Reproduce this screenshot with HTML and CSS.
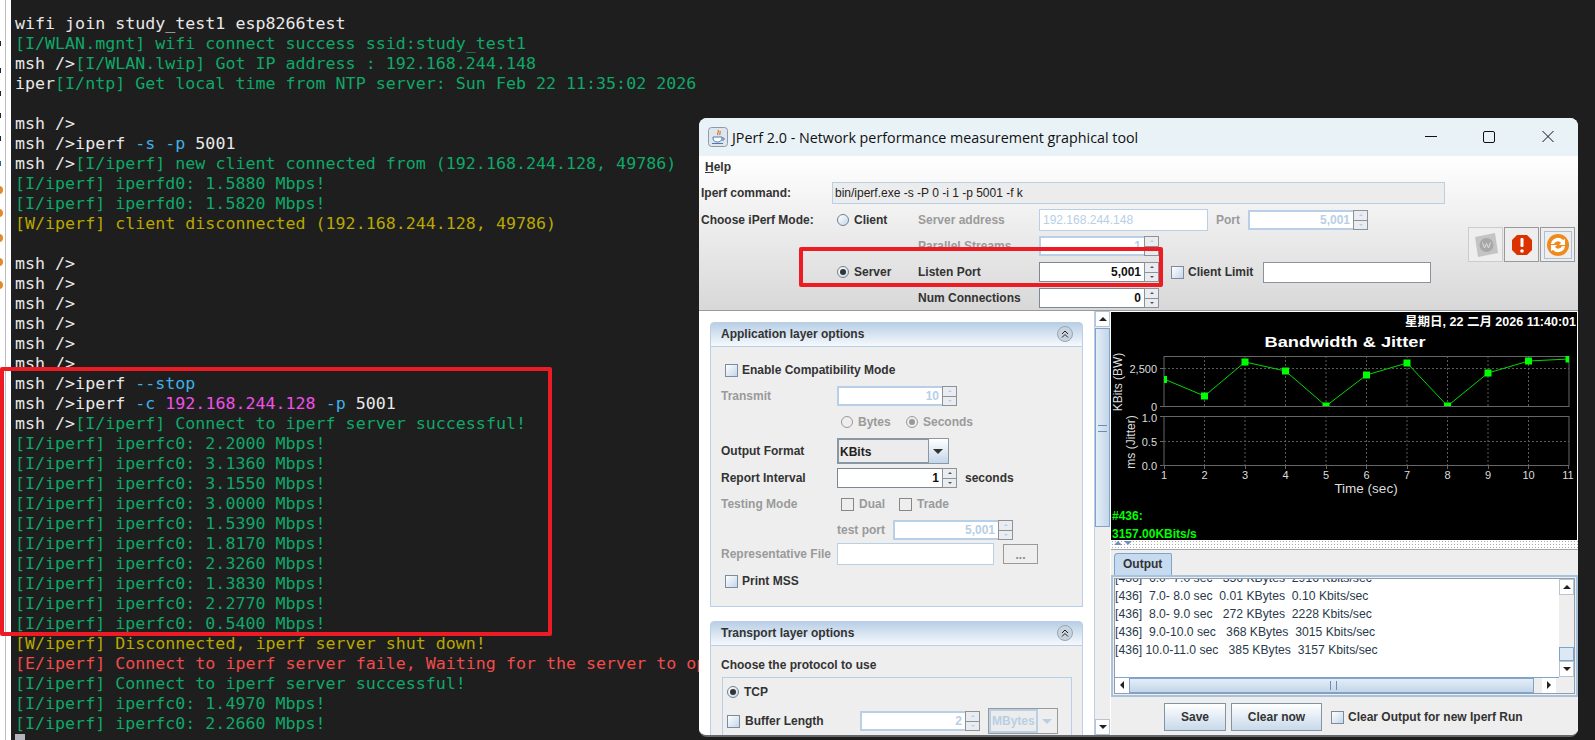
FILE: index.html
```html
<!DOCTYPE html>
<html lang="en">
<head>
<meta charset="utf-8">
<title>JPerf and msh terminal</title>
<link rel="stylesheet" href="styles.css">
</head>
<body>
<div class="desktop">
  <svg class="strip" width="11" height="740" viewBox="0 0 11 740">
    <rect width="11" height="740" fill="#fff"/>
    <rect x="5" width="1" height="740" fill="#bdbdbd"/>
    <path d="M0 41v5M0 68v5M0 91v5M0 113v5M0 136v5" stroke="#223" stroke-width="2"/>
    <path d="M0 161v5" stroke="#269" stroke-width="2"/>
    <g fill="#e08a2c"><circle cx="-1" cy="190" r="4"/><circle cx="-1" cy="213" r="4"/><circle cx="-1" cy="238" r="4"/><circle cx="-1" cy="262" r="4"/><circle cx="-1" cy="285" r="4"/></g>
  </svg>
  <main class="term">
    <div class="l"><span class="w">wifi join study_test1 esp8266test</span></div>
    <div class="l g">[I/WLAN.mgnt] wifi connect success ssid:study_test1</div>
    <div class="l"><span class="w">msh /&gt;</span><span class="g">[I/WLAN.lwip] Got IP address : 192.168.244.148</span></div>
    <div class="l"><span class="w">iper</span><span class="g">[I/ntp] Get local time from NTP server: Sun Feb 22 11:35:02 2026</span></div>
    <div class="l"></div>
    <div class="l w">msh /&gt;</div>
    <div class="l w">msh /&gt;iperf <span class="b">-s -p</span> 5001</div>
    <div class="l"><span class="w">msh /&gt;</span><span class="g">[I/iperf] new client connected from (192.168.244.128, 49786)</span></div>
    <div class="l g">[I/iperf] iperfd0: 1.5880 Mbps!</div>
    <div class="l g">[I/iperf] iperfd0: 1.5820 Mbps!</div>
    <div class="l y">[W/iperf] client disconnected (192.168.244.128, 49786)</div>
    <div class="l"></div>
    <div class="l w">msh /&gt;</div>
    <div class="l w">msh /&gt;</div>
    <div class="l w">msh /&gt;</div>
    <div class="l w">msh /&gt;</div>
    <div class="l w">msh /&gt;</div>
    <div class="l w">msh /&gt;</div>
    <div class="l w">msh /&gt;iperf <span class="b">--stop</span></div>
    <div class="l w">msh /&gt;iperf <span class="b">-c</span> <span class="m">192.168.244.128</span> <span class="b">-p</span> 5001</div>
    <div class="l"><span class="w">msh /&gt;</span><span class="g">[I/iperf] Connect to iperf server successful!</span></div>
    <div class="l g">[I/iperf] iperfc0: 2.2000 Mbps!</div>
    <div class="l g">[I/iperf] iperfc0: 3.1360 Mbps!</div>
    <div class="l g">[I/iperf] iperfc0: 3.1550 Mbps!</div>
    <div class="l g">[I/iperf] iperfc0: 3.0000 Mbps!</div>
    <div class="l g">[I/iperf] iperfc0: 1.5390 Mbps!</div>
    <div class="l g">[I/iperf] iperfc0: 1.8170 Mbps!</div>
    <div class="l g">[I/iperf] iperfc0: 2.3260 Mbps!</div>
    <div class="l g">[I/iperf] iperfc0: 1.3830 Mbps!</div>
    <div class="l g">[I/iperf] iperfc0: 2.2770 Mbps!</div>
    <div class="l g">[I/iperf] iperfc0: 0.5400 Mbps!</div>
    <div class="l y">[W/iperf] Disconnected, iperf server shut down!</div>
    <div class="l r">[E/iperf] Connect to iperf server faile, Waiting for the server to open!</div>
    <div class="l g">[I/iperf] Connect to iperf server successful!</div>
    <div class="l g">[I/iperf] iperfc0: 1.4970 Mbps!</div>
    <div class="l g">[I/iperf] iperfc0: 2.2660 Mbps!</div>
    <div class="cursor"></div>
  </main>
</div>

<section class="win">
  <header class="title">
    <svg class="jicon" width="20" height="20" viewBox="0 0 20 20">
      <rect x=".5" y=".5" width="19" height="19" rx="3" fill="#dfe6ee" stroke="#8e9aa8"/>
      <path d="M10 3c2 2-2 3 0 5M12 4c1 2-1 2 0 4" fill="none" stroke="#d8762a" stroke-width="1.2"/>
      <path d="M5 10h9v1c0 3-2 4-4.500 4S5 14 5 11zM14 11h2v2h-2" fill="#fff" stroke="#4f7aa8"/>
      <path d="M4 16.500h11" stroke="#4f7aa8"/>
    </svg>
    <span class="title-text">JPerf 2.0 - Network performance measurement graphical tool</span>
    <svg class="ctrl" width="130" height="14" viewBox="0 0 130 14">
      <path d="M0 6.500h12" stroke="#111"/>
      <rect x="58.500" y="1.500" width="11" height="11" rx="1.500" fill="none" stroke="#111"/>
      <path d="M117.500 1l11 11M128.500 1l-11 11" stroke="#111"/>
    </svg>
  </header>

  <div class="top">
    <div class="menu"><span><u>H</u>elp</span></div>
    <div class="top-grid">
      <div class="rows">
        <div class="row"><span class="c-mode">Iperf command:</span><div class="cmd">bin/iperf.exe -s -P 0 -i 1 -p 5001 -f k</div></div>
        <div class="row">
          <span class="c-mode">Choose iPerf Mode:</span>
          <span class="c-radio"><i class="radio"></i>Client</span>
          <span class="c-label off">Server address</span>
          <div class="field off w169">192.168.244.148</div>
          <span class="port off">Port</span>
          <div class="spin off w120"><div class="val">5,001</div><div class="btns"><i></i><i></i></div></div>
        </div>
        <div class="row">
          <span class="c-mode"></span><span class="c-radio"></span>
          <span class="c-label off">Parallel Streams</span>
          <div class="spin off w120"><div class="val">1</div><div class="btns"><i></i><i></i></div></div>
        </div>
        <div class="row">
          <span class="c-mode"></span>
          <span class="c-radio"><i class="radio on"></i>Server</span>
          <span class="c-label">Listen Port</span>
          <div class="spin w120"><div class="val">5,001</div><div class="btns"><i></i><i></i></div></div>
          <span class="limit"><i class="check"></i>Client Limit</span>
          <div class="field w168"></div>
        </div>
        <div class="row">
          <span class="c-mode"></span><span class="c-radio"></span>
          <span class="c-label">Num Connections</span>
          <div class="spin w120"><div class="val">0</div><div class="btns"><i></i><i></i></div></div>
        </div>
      </div>
      <div class="actions">
        <div class="act dim"><svg width="30" height="30" viewBox="0 0 30 30"><path d="M4 7l20-4 3 20-20 4z" fill="#c4c4c4"/><circle cx="15.500" cy="15" r="7" fill="#a8a8a8"/><path d="M11.500 12.500l2 5.500 2-4.500 2 4.500 2-5.500" fill="none" stroke="#ddd"/></svg></div>
        <div class="act"><svg width="24" height="24" viewBox="0 0 24 24"><path d="M7 2h10l5 5v10l-5 5H7l-5-5V7z" fill="#dc3200"/><rect x="10.500" y="5" width="3" height="9" rx="1" fill="#fff"/><circle cx="12" cy="18" r="1.800" fill="#fff"/></svg></div>
        <div class="act framed"><svg width="24" height="24" viewBox="0 0 24 24"><circle cx="12" cy="12" r="11" fill="#ee8a1e"/><path d="M5 11a7 7 0 0 1 12-4l2-1v6h-6l2-2a4 4 0 0 0-7 1zM19 13a7 7 0 0 1-12 4l-2 1v-6h6l-2 2a4 4 0 0 0 7-1z" fill="#fff"/></svg></div>
      </div>
    </div>
  </div>

  <div class="main">
    <div class="left">
      <section class="panel">
        <header class="phead"><span>Application layer options</span><svg class="fold" width="16" height="16" viewBox="0 0 16 16"><circle cx="8" cy="8" r="7.500" fill="#c7d3df" stroke="#99a6b3"/><path d="M5 8l3-3 3 3M5 11.500l3-3 3 3" fill="none" stroke="#222"/></svg></header>
        <div class="pbody app">
          <div class="prow chk"><i class="check"></i>Enable Compatibility Mode</div>
          <div class="prow off"><span class="plabel">Transmit</span><div class="spin off w120"><div class="val">10</div><div class="btns"><i></i><i></i></div></div></div>
          <div class="prow off"><span class="plabel"></span><span class="opt w65"><i class="radio dis"></i>Bytes</span><span class="opt"><i class="radio dis on"></i>Seconds</span></div>
          <div class="prow low"><span class="plabel">Output Format</span><div class="combo w112"><div class="cval">KBits</div><div class="carrow"></div></div></div>
          <div class="prow"><span class="plabel">Report Interval</span><div class="spin w120"><div class="val">1</div><div class="btns"><i></i><i></i></div></div><span class="unit">seconds</span></div>
          <div class="prow off"><span class="plabel">Testing Mode</span><span class="opt w58"><i class="check dis"></i>Dual</span><span class="opt"><i class="check dis"></i>Trade</span></div>
          <div class="prow off"><span class="plabel"></span><span class="tp">test port</span><div class="spin off w120"><div class="val">5,001</div><div class="btns"><i></i><i></i></div></div></div>
          <div class="prow off"><span class="plabel">Representative File</span><div class="field off w157"></div><div class="dots">...</div></div>
          <div class="prow chk"><i class="check"></i>Print MSS</div>
        </div>
      </section>
      <section class="panel next">
        <header class="phead"><span>Transport layer options</span><svg class="fold" width="16" height="16" viewBox="0 0 16 16"><circle cx="8" cy="8" r="7.500" fill="#c7d3df" stroke="#99a6b3"/><path d="M5 8l3-3 3 3M5 11.500l3-3 3 3" fill="none" stroke="#222"/></svg></header>
        <div class="pbody trans">
          <div class="choose">Choose the protocol to use</div>
          <div class="box">
            <div class="brow"><i class="radio on"></i>TCP</div>
            <div class="brow"><i class="check"></i><span class="blabel">Buffer Length</span><div class="spin off w120 small"><div class="val">2</div><div class="btns"><i></i><i></i></div></div><div class="combo off w70"><div class="cval">MBytes</div><div class="carrow"></div></div></div>
          </div>
        </div>
      </section>
    </div>

    <div class="vbar"><div class="sb-up"></div><div class="sb-thumb"></div><div class="sb-track"></div><div class="sb-down"></div></div>

    <div class="right">
      <svg class="chart" width="466" height="228" viewBox="1111 312 466 228">
        <defs><clipPath id="plot"><rect x="1164" y="356" width="405" height="50"/></clipPath></defs>
        <rect x="1111" y="312" width="466" height="228" fill="#000"/>
        <text class="t-date" x="1576" y="326" text-anchor="end">星期日, 22 二月 2026 11:40:01</text>
        <text class="t-title" x="1345" y="347" text-anchor="middle" textLength="161" lengthAdjust="spacingAndGlyphs">Bandwidth &amp; Jitter</text>
        <g stroke="#5a5a5a" stroke-dasharray="2 2" fill="none">
          <path d="M1204.500 356v50M1245 356v50M1285.500 356v50M1326 356v50M1366.500 356v50M1407 356v50M1447.500 356v50M1488 356v50M1528.500 356v50"/>
          <path d="M1204.500 416v49M1245 416v49M1285.500 416v49M1326 416v49M1366.500 416v49M1407 416v49M1447.500 416v49M1488 416v49M1528.500 416v49"/>
          <path d="M1164 368.500h405M1164 441.500h405"/>
        </g>
        <g stroke="#666" fill="none">
          <rect x="1164" y="356.500" width="405" height="50"/>
          <rect x="1164" y="416.500" width="405" height="49"/>
          <path d="M1160 368.500h4M1160 406.500h4M1160 416.500h4M1160 441.500h4M1160 465.500h4M1164.500 465v4M1204.500 465v4M1245.500 465v4M1285.500 465v4M1326.500 465v4M1366.500 465v4M1407.500 465v4M1447.500 465v4M1488.500 465v4M1528.500 465v4M1568.500 465v4"/>
        </g>
        <g clip-path="url(#plot)">
          <polyline points="1164,379 1204.500,396 1245,362 1285.500,371 1326,406 1366.500,375 1407,363 1447.500,406 1488,373 1528.500,361 1569,359" fill="none" stroke="#00d800"/>
          <g fill="#00ff00">
            <rect x="1160" y="376" width="7" height="7"/><rect x="1201" y="392.500" width="7" height="7"/><rect x="1241.500" y="358.500" width="7" height="7"/><rect x="1282" y="367.500" width="7" height="7"/><rect x="1322.500" y="402.500" width="7" height="7"/><rect x="1363" y="371.500" width="7" height="7"/><rect x="1403.500" y="359.500" width="7" height="7"/><rect x="1444" y="402.500" width="7" height="7"/><rect x="1484.500" y="369.500" width="7" height="7"/><rect x="1525" y="357.500" width="7" height="7"/><rect x="1565.500" y="355.500" width="7" height="7"/>
          </g>
        </g>
        <g class="t-tick">
          <text x="1157" y="373" text-anchor="end">2,500</text>
          <text x="1157" y="411" text-anchor="end">0</text>
          <text x="1157" y="422" text-anchor="end">1.0</text>
          <text x="1157" y="446" text-anchor="end">0.5</text>
          <text x="1157" y="470" text-anchor="end">0.0</text>
        </g>
        <g class="t-tick" text-anchor="middle">
          <text x="1164" y="479">1</text><text x="1204.500" y="479">2</text><text x="1245" y="479">3</text><text x="1285.500" y="479">4</text><text x="1326" y="479">5</text><text x="1366.500" y="479">6</text><text x="1407" y="479">7</text><text x="1447.500" y="479">8</text><text x="1488" y="479">9</text><text x="1528.500" y="479">10</text><text x="1568" y="479">11</text>
        </g>
        <text class="t-time" x="1366" y="493" text-anchor="middle">Time (sec)</text>
        <text class="t-axis" transform="translate(1122 382) rotate(-90)" text-anchor="middle">KBits (BW)</text>
        <text class="t-axis" transform="translate(1135 442) rotate(-90)" text-anchor="middle">ms (Jitter)</text>
        <text class="t-green" x="1112" y="520">#436:</text>
        <text class="t-green" x="1112" y="538">3157.00KBits/s</text>
      </svg>
      <div class="split"><i class="tri-up"></i><i class="tri-down"></i></div>
      <div class="output">
        <div class="tab">Output</div>
        <div class="tabbox">
          <div class="log">
            <div class="log-text">
              <div>[436]  6.0- 7.0 sec   356 KBytes  2916 Kbits/sec</div>
              <div>[436]  7.0- 8.0 sec  0.01 KBytes  0.10 Kbits/sec</div>
              <div>[436]  8.0- 9.0 sec   272 KBytes  2228 Kbits/sec</div>
              <div>[436]  9.0-10.0 sec   368 KBytes  3015 Kbits/sec</div>
              <div>[436] 10.0-11.0 sec   385 KBytes  3157 Kbits/sec</div>
            </div>
            <div class="log-v"><div class="sb-up"></div><div class="sb-track"></div><div class="sb-thumb2"></div><div class="sb-down"></div></div>
            <div class="log-h"><div class="hb-left"></div><div class="hb-thumb"></div><div class="hb-right"></div></div>
          </div>
        </div>
        <div class="btnrow">
          <div class="btn b62">Save</div>
          <div class="btn b91">Clear now</div>
          <span class="clearopt"><i class="check"></i>Clear Output for new Iperf Run</span>
        </div>
      </div>
    </div>
  </div>
</section>

<div class="redbox one"></div>
<div class="redbox two"></div>
</body>
</html>
```
FILE: styles.css
```css
* { box-sizing: border-box; }
html, body { margin: 0; height: 740px; overflow: hidden; background: #1e1e1e; }
i { font-style: normal; display: block; flex: none; }

.desktop { display: flex; height: 740px; }
.strip { flex: none; display: block; }
.term {
  flex: 1; padding: 14px 0 0 4px; overflow: hidden;
  font: 16.65px/20px "DejaVu Sans Mono", "Liberation Mono", monospace;
  color: #e6e6e6;
}
.l { height: 20px; white-space: pre; }
.w { color: #e8e8e8; }
.g { color: #0fa868; }
.y { color: #b8a800; }
.r { color: #f14c4c; }
.b { color: #3fb0e8; }
.m { color: #f050e8; }
.cursor { width: 10px; height: 6px; background: #b4b4be; }

.redbox { position: absolute; border: 4px solid #ed1c24; border-radius: 2px; }
.redbox.one { left: 799px; top: 247px; width: 364px; height: 40px; }
.redbox.two { left: 0; top: 367px; width: 552px; height: 269px; }

/* window */
.win {
  position: absolute; left: 699px; top: 118px; width: 879px; height: 619px;
  background: #eee; border-radius: 8px; overflow: hidden;
  border-bottom: 2px solid #62686d;
  font: bold 12px "Liberation Sans", Arial, sans-serif; color: #333;
}
.title { height: 38px; background: #e9f3f7; display: flex; align-items: center; padding-left: 9px; }
.jicon { flex: none; }
.title-text { flex: none; margin-left: 4px; font: 14.3px "Open Sans", "Noto Sans", sans-serif; color: #111; }
.ctrl { flex: none; margin-left: auto; margin-right: 23px; }

.top { height: 154px; background: linear-gradient(#fff, #d8d8d8); }
.menu { height: 24px; padding: 4px 0 0 6px; color: #333; }
.top-grid { display: flex; }
.rows { width: 769px; flex: none; }
.row { height: 26px; display: flex; align-items: center; }
.row + .row { padding-top: 2px; }
.c-mode { width: 134px; padding-left: 2px; flex: none; }
.c-radio { width: 85px; padding-left: 4px; flex: none; display: flex; align-items: center; gap: 5px; }
.c-label { width: 121px; flex: none; }
.port { margin: 0 10px 0 8px; flex: none; width: 22px; }
.off, .off .plabel { color: #9a9a9a; }
.cmd {
  width: 613px; height: 22px; margin-left: -1px; padding: 3px 2px; font-weight: normal; color: #222;
  border: 1px solid #b8cfe5; background: #ececec; font-size: 12px; line-height: 15px;
}
.radio {
  width: 12px; height: 12px; border-radius: 50%; border: 1px solid #71808f;
  background: linear-gradient(135deg, #fff, #c6d8ea); position: relative;
}
.radio.on::after {
  content: ""; position: absolute; left: 2px; top: 2px; width: 6px; height: 6px;
  border-radius: 50%; background: #333;
}
.radio.dis { border-color: #999; background: #eee; }
.radio.dis.on::after { background: #999; }
.check {
  width: 13px; height: 13px; border: 1px solid #7c8c9c;
  background: linear-gradient(135deg, #fff, #c3d6e9);
}
.check.dis { border-color: #888; background: #eee; }
.field { height: 22px; border: 1px solid #8a939c; background: #fff; flex: none; }
.field.off { border-color: #b8cfe5; font-weight: normal; color: #b8cfe5; padding: 3px 3px; line-height: 14px; font-size: 12px; }
.w169 { width: 169px; }
.w168 { width: 168px; height: 21px; }
.w157 { width: 157px; }
.spin { display: flex; height: 20px; flex: none; }
.w120 { width: 120px; }
.val {
  flex: 1; background: #fff; border: 1px solid #7d8893; border-right: 0;
  text-align: right; padding-right: 3px; line-height: 18px; color: #111;
}
.spin.off .val { border: 2px solid #b8cfe5; border-right: 0; color: #b8cfe5; line-height: 16px; background: #fff; }
.btns { width: 15px; flex: none; display: flex; flex-direction: column; }
.btns i {
  flex: 1; border: 1px solid #8e9295; background: #e9edf2; position: relative;
}
.btns i + i { border-top: 0; }
.btns i::after {
  content: ""; position: absolute; left: 5px; top: 3px;
  border: 2px solid transparent; border-top: 0; border-bottom: 2px solid #555;
}
.btns i + i::after { border-bottom: 0; border-top: 2px solid #555; }
.spin.off .btns i::after { border-bottom-color: #b8cfe5; border-top-color: #b8cfe5; }
.limit { margin-left: 12px; width: 92px; flex: none; display: flex; align-items: center; gap: 4px; }
.actions { display: flex; gap: 1px; margin-top: 47px; align-items: flex-start; height: 35px; }
.act {
  width: 35px; height: 35px; border: 1px solid #999; background: #eee;
  display: flex; align-items: center; justify-content: center;
}
.act.dim { border-color: #ccc; }
.act.framed svg { outline: 1px solid #a9c0d6; outline-offset: 1px; }

/* main */
.main { display: flex; height: 425px; border-top: 1px solid #989c9f; }
.left { width: 395px; flex: none; background: #fff; padding: 11px 11px 0; overflow: hidden; }
.panel { width: 373px; }
.next { margin-top: 14px; }
.phead {
  height: 25px; display: flex; align-items: center; justify-content: space-between; padding: 0 9px 2px 10px;
  background: linear-gradient(#b9cfe6, #f6f9fc); border: 1px solid #b8cfe5; border-radius: 4px 4px 0 0; color: #333;
}
.fold { flex: none; display: block; }
.pbody { border: 1px solid #b8cfe5; border-top: 0; background: #eee; }
.app { height: 260px; padding-top: 10px; display: grid; grid-template-rows: 26px 26px 26px 30px 26px 26px 26px 22px 32px; }
.prow { display: flex; align-items: center; padding-left: 10px; }
.prow.chk { padding-left: 14px; gap: 4px; }
.prow.low { padding-top: 2px; }
.plabel { width: 116px; flex: none; }
.opt { display: flex; align-items: center; gap: 5px; margin-left: 4px; }
.w65 { width: 61px; }
.w58 { width: 54px; }
.combo { display: flex; height: 26px; border: 1px solid #8a97a4; flex: none; }
.w112 { width: 112px; }
.w70 { width: 70px; }
.cval { flex: 1; padding: 5px 1px; border: 1px solid #8a97a4; background: #ececec; color: #222; }
.carrow {
  width: 19px; flex: none; background: linear-gradient(#fff, #c3d6e9); position: relative;
}
.carrow::after {
  content: ""; position: absolute; left: 4px; top: 10px;
  border: 5px solid transparent; border-bottom: 0; border-top: 5px solid #333;
}
.combo.off { border-color: #999; }
.combo.off .cval { border: 2px solid #b8cfe5; color: #b8cfe5; padding: 3px 1px; }
.combo.off .carrow { background: #eee; }
.combo.off .carrow::after { border-top-color: #b8cfe5; }
.unit { margin-left: 8px; }
.tp { width: 56px; flex: none; }
.dots {
  width: 35px; height: 20px; margin-left: 9px; border: 1px solid #999; flex: none;
  text-align: center; line-height: 20px; color: #888;
}
.trans { height: 120px; }
.choose { height: 31px; padding: 12px 0 0 10px; }
.box { margin-left: 11px; width: 350px; height: 90px; border: 1px solid #b8cfe5; padding: 0 4px; }
.brow { height: 28px; display: flex; align-items: center; gap: 5px; }
.brow + .brow { height: 30px; }
.blabel { width: 110px; flex: none; }
.small { margin-right: 3px; }

.vbar { width: 16px; flex: none; background: #eee; display: flex; flex-direction: column; border-left: 1px solid #b8cfe5; }
.sb-up, .sb-down { height: 16px; flex: none; background: #fff; border: 1px solid #b8c4d0; position: relative; }
.sb-up::after, .sb-down::after {
  content: ""; position: absolute; left: 3px; top: 5px; border: 4px solid transparent;
}
.sb-up::after { border-top: 0; border-bottom: 4px solid #222; }
.sb-down::after { border-bottom: 0; border-top: 4px solid #222; }
.sb-thumb {
  height: 199px; flex: none; border: 1px solid #7fa3cb; margin-top: 1px; position: relative;
  background: linear-gradient(90deg, #e4edf6, #c3d6ea);
}
.sb-thumb::after {
  content: ""; position: absolute; left: 2px; right: 2px; top: 96px; height: 5px;
  border-top: 1px solid #6c8db3; border-bottom: 1px solid #6c8db3;
}
.sb-track { flex: 1; background: #eee; }

.right { flex: 1; min-width: 0; padding: 1px 0 0 1px; background: #fff; }
.chart { display: block; }
.t-date { font: bold 12.5px "Liberation Sans", "Noto Sans CJK SC", sans-serif; fill: #fff; }
.t-title { font: bold 15px "Liberation Sans", sans-serif; fill: #fff; }
.t-tick { font: 11px "Liberation Sans", sans-serif; fill: #ddd; }
.t-axis { font: 12px "Liberation Sans", sans-serif; fill: #ddd; }
.t-time { font: 13.5px "Liberation Sans", sans-serif; fill: #ddd; }
.t-green { font: bold 12px "Liberation Sans", sans-serif; fill: #00ff00; }
.split {
  height: 9px; display: flex; gap: 2px; padding: 1px 0 0 3px; background-color: #fff;
  background-image: radial-gradient(#aaa 0.6px, transparent 0.8px); background-size: 3px 3px;
}
.tri-up, .tri-down { width: 0; height: 0; border: 4px solid transparent; }
.tri-up { border-top: 0; border-bottom: 4px solid #6f8fb5; }
.tri-down { border-bottom: 0; border-top: 4px solid #6f8fb5; }
.output { height: 186px; background: #eee; padding-top: 3px; border-top: 1px solid #a0a7ad; }
.tab {
  width: 58px; height: 22px; margin-left: 3px; padding: 3px 0 0 8px;
  background: #c7dbf0; border: 1px solid #7fa3cb; border-bottom: 0; border-radius: 4px 2px 0 0; color: #333;
}
.tabbox { height: 122px; border: 2px solid #a8c2dc; padding: 1px; background: #eee; }
.log { height: 116px; display: grid; grid-template-columns: 1fr 15px; grid-template-rows: 98px 16px; border: 1px solid #8e9eae; }
.log-text {
  background: #fff; overflow: hidden; font: normal 12.2px/18px "Liberation Sans", sans-serif;
  color: #2a3a4a;
}
.log-text div { white-space: pre; }
.log-text div:first-child { margin-top: -10px; }
.log-v { display: flex; flex-direction: column; background: #eee; }
.log-v .sb-track { flex: 1; }
.sb-thumb2 { height: 14px; flex: none; background: #dce8f4; border: 1px solid #7fa3cb; }
.log-h { display: flex; background: #eee; border-top: 1px solid #7fa3cb; }
.hb-left, .hb-right { width: 14px; flex: none; background: #fff; position: relative; }
.hb-right { margin-left: 8px; }
.hb-left::after, .hb-right::after {
  content: ""; position: absolute; top: 3px; left: 5px; border: 4px solid transparent;
}
.hb-left::after { border-left: 0; border-right: 4px solid #222; }
.hb-right::after { border-right: 0; border-left: 4px solid #222; }
.hb-thumb { width: 405px; flex: none; background: linear-gradient(#e4edf6, #c3d6ea); border: 1px solid #7fa3cb; position: relative; }
.hb-thumb::after {
  content: ""; position: absolute; top: 2px; bottom: 2px; left: 200px; width: 5px;
  border-left: 1px solid #6c8db3; border-right: 1px solid #6c8db3;
}
.btnrow { display: flex; align-items: center; height: 39px; padding: 1px 0 0 53px; gap: 5px; }
.btn {
  height: 28px; line-height: 26px; border: 1px solid #8094a8; text-align: center; flex: none;
  background: linear-gradient(#fff, #c7d9ea); color: #333;
}
.b62 { width: 62px; }
.b91 { width: 91px; }
.clearopt { display: flex; align-items: center; gap: 4px; margin-left: 4px; }
```
